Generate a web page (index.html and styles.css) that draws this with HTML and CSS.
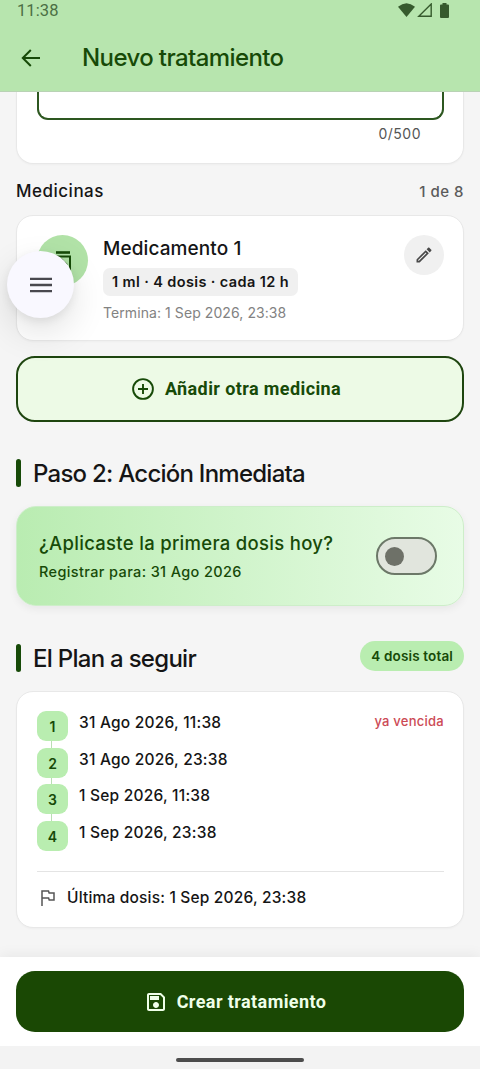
FILE: index.html
```html
<!DOCTYPE html>
<html lang="es">
<head>
<meta charset="utf-8">
<meta name="viewport" content="width=device-width, initial-scale=1">
<title>Nuevo tratamiento</title>
<link rel="stylesheet" href="styles.css">
</head>
<body>
<div class="screen">
  <header class="top">
    <div class="status">
      <span class="clock">11:38</span>
      <span class="status-icons">
        <svg width="17" height="14" viewBox="0 0 17 14"><path d="M0 3.8Q8.500-3.400 17 3.800L8.500 14Z" fill="#365a2d"/></svg>
        <svg width="15" height="14" viewBox="0 0 15 14"><path d="M1.800 13.200H14.200V1Z" fill="none" stroke="#365a2d" stroke-width="1.400"/></svg>
        <svg class="battery" width="9" height="15" viewBox="0 0 9 15"><path d="M2.500 1.400V0h4v1.400H8q1 0 1 1V14q0 1-1 1H1q-1 0-1-1V2.400q0-1 1-1Z" fill="#365a2d"/></svg>
      </span>
    </div>
    <div class="appbar">
      <svg class="back" width="20" height="18" viewBox="0 0 20 18"><path d="M19 9H2M9.800 1 1.800 9l8 8" fill="none" stroke="#174a08" stroke-width="2"/></svg>
      <h1 class="title">Nuevo tratamiento</h1>
    </div>
  </header>

  <main class="content">
    <section class="card notes">
      <div class="field"></div>
      <div class="counter">0/500</div>
    </section>

    <div class="list-head"><h2 class="list-title">Medicinas</h2><span class="list-count">1 de 8</span></div>

    <section class="card medicine">
      <div class="avatar">
        <svg width="24" height="24" viewBox="0 0 24 24" fill="none" stroke="#164b08" stroke-width="2"><path d="M5 3.500h14" stroke-width="2.600"/><path d="M6 7.500h13v13H6zM10 10l6 6M9 14l4 4"/></svg>
      </div>
      <div class="med-info">
        <div class="med-name">Medicamento 1</div>
        <div class="med-dose">1 ml · 4 dosis · cada 12 h</div>
        <div class="med-end">Termina: 1 Sep 2026, 23:38</div>
      </div>
      <button class="edit" aria-label="Editar">
        <svg width="20" height="20" viewBox="0 0 24 24" fill="#484848"><path d="M14.060 9.020l.92.920L5.920 19H5v-.92l9.060-9.060M17.660 3c-.25 0-.51.100-.7.290l-1.830 1.830 3.750 3.750 1.830-1.830c.39-.39.39-1.020 0-1.410l-2.340-2.340c-.2-.2-.45-.29-.71-.29zm-3.600 3.190L3 17.250V21h3.750L17.810 9.940l-3.750-3.750z"/></svg>
      </button>
      <button class="menu" aria-label="Menú"><svg width="22" height="16" viewBox="0 0 22 16"><path d="M0 1.900h22M0 8h22M0 14.100h22" stroke="#49484e" stroke-width="2.400"/></svg></button>
    </section>

    <button class="add">
      <svg width="22" height="22" viewBox="0 0 22 22" fill="none" stroke="#174a08" stroke-width="1.900"><circle cx="11" cy="11" r="9.900"/><path d="M11 6v10M6 11h10"/></svg>
      <span class="add-label">Añadir otra medicina</span>
    </button>

    <div class="section-head step"><i class="mark"></i><h2 class="section-title">Paso 2: Acción Inmediata</h2></div>

    <section class="now">
      <div class="now-text">
        <div class="now-title">¿Aplicaste la primera dosis hoy?</div>
        <div class="now-sub">Registrar para: 31 Ago 2026</div>
      </div>
      <div class="switch" role="switch" aria-checked="false"><i class="knob"></i></div>
    </section>

    <div class="section-head plan-head"><i class="mark"></i><h2 class="section-title plan-title">El Plan a seguir</h2><span class="chip">4 dosis total</span></div>

    <section class="card plan">
      <ol class="doses">
        <li class="dose"><span class="num">1</span><span class="date">31 Ago 2026, 11:38</span><span class="late">ya vencida</span></li>
        <li class="dose"><span class="num">2</span><span class="date">31 Ago 2026, 23:38</span></li>
        <li class="dose"><span class="num">3</span><span class="date">1 Sep 2026, 11:38</span></li>
        <li class="dose"><span class="num">4</span><span class="date">1 Sep 2026, 23:38</span></li>
      </ol>
      <div class="last">
        <svg width="14" height="16" viewBox="0 0 14 16"><path d="M1 16V1h6.500l.6 2H13v7H8.200l-.6-2H1" fill="none" stroke="#555" stroke-width="1.500"/></svg>
        <span class="last-text">Última dosis: 1 Sep 2026, 23:38</span>
      </div>
    </section>
  </main>

  <footer class="actions">
    <button class="create">
      <svg width="24" height="24" viewBox="0 0 24 24" fill="#efffe9"><path d="M17 3H5c-1.110 0-2 .9-2 2v14c0 1.100.89 2 2 2h14c1.100 0 2-.9 2-2V7l-4-4zm2 16H5V5h11.170L19 7.830V19zm-7-7c-1.660 0-3 1.340-3 3s1.340 3 3 3 3-1.340 3-3-1.340-3-3-3zM6 6h9v4H6z"/></svg>
      <span class="create-label">Crear tratamiento</span>
    </button>
  </footer>
  <div class="gesture"><i class="gesture-bar"></i></div>
</div>
</body>
</html>
```

FILE: styles.css
```css
* { box-sizing: border-box; }
body { margin: 0; background: #f5f5f5; font-family: Inter, "Noto Sans", sans-serif; color: #151515; }
h1, h2, ol { margin: 0; padding: 0; font-weight: 500; }
button { border: 0; padding: 0; font: inherit; }
svg { display: block; flex: none; }
.screen { width: 480px; height: 1069px; display: flex; flex-direction: column; overflow: hidden; }

.top { height: 92px; flex: none; background: #b7e5ae; border-bottom: 1px solid #b9d2b5; }
.status { height: 24px; display: flex; justify-content: space-between; align-items: flex-start; padding: 0 31px 0 17px; }
.clock { font: 400 16.5px/21px Roboto, sans-serif; color: #4b6f44; letter-spacing: .1px; }
.status-icons { display: flex; gap: 2px; padding-top: 3px; }
.battery { margin-left: 6px; }
.appbar { height: 67px; display: flex; align-items: center; padding-left: 21px; }
.title { margin-left: 41px; padding-top: 1px; font-size: 24px; line-height: 30px; color: #174a08; letter-spacing: -.6px; }

.content { flex: 1; min-height: 0; padding: 0 16px; }
.card { background: #fff; border: 1px solid #e8e8e8; border-radius: 17px; box-shadow: 0 1px 2px rgba(0,0,0,.03); }
.notes { height: 72px; padding: 0 19px 0 20px; border-top: 0; border-radius: 0 0 17px 17px; }
.field { height: 28px; border: 2px solid #2d5720; border-top: 0; border-radius: 0 0 11px 11px; }
.counter { margin-top: 5px; padding-right: 23px; text-align: right; font-size: 14px; line-height: 18px; color: #555; letter-spacing: .5px; }
.list-head { height: 51px; display: flex; justify-content: space-between; align-items: center; padding-top: 3px; }
.list-title { font-size: 17px; line-height: 24px; letter-spacing: .5px; }
.list-count { font-size: 15px; font-weight: 500; color: #5b5b5b; letter-spacing: .5px; }

.medicine { position: relative; height: 126px; padding: 19px 19px 0 20px; display: flex; }
.avatar { width: 51px; height: 51px; border-radius: 50%; background: #b1e2a7; display: grid; place-items: center; }
.med-info { flex: 1; padding-left: 15px; display: flex; flex-direction: column; align-items: flex-start; }
.med-name { font-size: 19px; line-height: 27px; font-weight: 500; letter-spacing: .1px; white-space: nowrap; }
.med-dose { height: 28px; margin-top: 6px; padding: 0 9px; border-radius: 7px; background: #f0f0f0; font-size: 14.5px; line-height: 28px; font-weight: 600; letter-spacing: .38px; white-space: nowrap; }
.med-end { margin-top: 8px; font-size: 14px; line-height: 18px; color: #828282; letter-spacing: .08px; white-space: nowrap; }
.edit { width: 40px; height: 40px; border-radius: 50%; background: #f0f0f0; display: grid; place-items: center; }
/* floating menu button overlapping the card edge */
.menu { position: absolute; left: -10px; top: 35px; width: 67px; height: 67px; border-radius: 50%; background: #f9f8ff; box-shadow: 0 14px 36px rgba(0,0,0,.12), 0 3px 10px rgba(0,0,0,.07); display: grid; place-items: center; }

.add { width: 100%; height: 66px; margin-top: 15px; padding-right: 7px; border: 2px solid #1e450f; border-radius: 19px; background: #edfae6; display: flex; align-items: center; justify-content: center; gap: 11px; color: #174a08; }
.add-label { font: 700 18px/24px Roboto, sans-serif; letter-spacing: .4px; }

.section-head { display: flex; align-items: center; height: 30px; }
.step { margin-top: 36px; }
.mark { width: 5px; height: 28px; border-radius: 3px; background: #174a08; }
.section-title { margin-left: 12px; padding-top: 1px; font-size: 24px; line-height: 30px; letter-spacing: -.75px; white-space: nowrap; }
.now { height: 100px; margin-top: 18px; padding: 0 26px 0 22px; border: 1px solid #cdeec9; border-radius: 20px; background: linear-gradient(90deg, #b9ecb1, #e8fce6); background-origin: border-box; box-shadow: 0 3px 9px rgba(0,0,0,.06); display: flex; align-items: center; justify-content: space-between; color: #174a08; }
.now-title { font-size: 18.5px; line-height: 26px; font-weight: 500; letter-spacing: .3px; white-space: nowrap; }
.now-sub { margin-top: 5px; font-size: 14.5px; line-height: 22px; font-weight: 500; letter-spacing: .37px; white-space: nowrap; }
.switch { width: 61px; height: 38px; border: 2px solid #6c7868; border-radius: 19px; background: #e1e5dd; display: flex; align-items: center; padding-left: 7px; }
.knob { width: 19px; height: 19px; border-radius: 50%; background: #6e7168; }
.plan-head { margin-top: 35px; }
.plan-head .mark { margin-top: 4px; }
.plan-title { padding-top: 5px; letter-spacing: -.72px; }
.chip { margin-left: auto; height: 30px; padding: 0 11px 0 11.5px; border-radius: 15px; background: #b9edb0; color: #174a08; font-size: 13.5px; line-height: 30px; font-weight: 600; letter-spacing: .15px; white-space: nowrap; }

.plan { height: 237px; margin-top: 20px; padding: 19px 19px 0 20px; }
.doses { list-style: none; height: 161px; border-bottom: 1px solid #e4e4e4; }
.dose { height: 36.6px; display: flex; align-items: flex-start; }
.num { position: relative; width: 31px; height: 30px; border-radius: 9px; background: #b9edb0; color: #174a08; font-size: 14px; line-height: 31px; font-weight: 600; text-align: center; }
/* connector between consecutive doses */
.dose:not(:last-child) .num::after { content: ""; position: absolute; left: 14px; top: 30px; width: 1px; height: 7px; background: #b9dfb3; }
.date { margin-left: 11px; font-size: 15.5px; line-height: 23px; font-weight: 500; letter-spacing: .22px; white-space: nowrap; }
.late { margin-left: auto; font-size: 13px; line-height: 20px; color: #cc4a55; letter-spacing: .25px; }
.last { margin-top: 15px; padding-left: 4px; display: flex; align-items: center; gap: 12px; }
.last-text { font-size: 15.5px; line-height: 22px; font-weight: 500; letter-spacing: .18px; white-space: nowrap; }

.actions { height: 89px; flex: none; padding: 14px 16px 0; background: #fff; box-shadow: 0 -3px 12px rgba(0,0,0,.05); }
.create { width: 100%; height: 61px; padding-right: 10px; border-radius: 19px; background: #1a4804; color: #efffe9; display: flex; align-items: center; justify-content: center; gap: 9px; }
.create-label { font: 700 18px/24px Roboto, sans-serif; letter-spacing: .42px; }
.gesture { height: 23px; flex: none; background: #f3f3f3; display: flex; justify-content: center; padding-top: 12px; }
.gesture-bar { width: 128px; height: 4px; border-radius: 2px; background: #4d4d4d; }
```
